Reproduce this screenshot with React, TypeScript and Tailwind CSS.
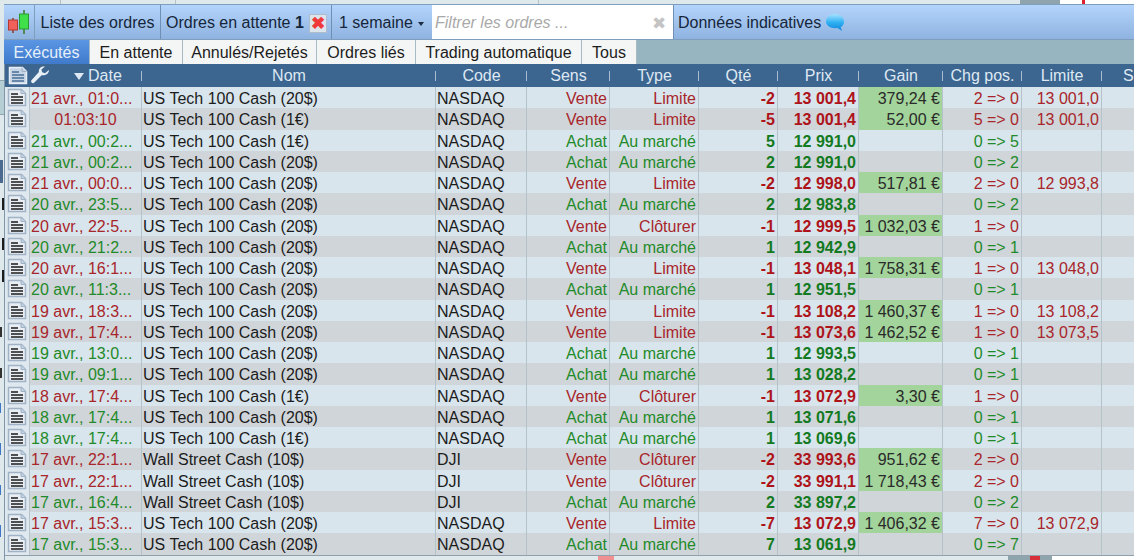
const FONT = "font-['Liberation_Sans',Arial,sans-serif]"

type Row = {
  date: string
  nom: string
  code: string
  sell: boolean
  type: string
  qte: string
  prix: string
  gain?: string
  chg: string
  limite?: string
  center?: boolean
}

const TECH20 = 'US Tech 100 Cash (20$)'
const TECH1 = 'US Tech 100 Cash (1€)'
const WALL = 'Wall Street Cash (10$)'

const ROWS: Row[] = [
  { date: '21 avr., 01:0...', nom: TECH20, code: 'NASDAQ', sell: true, type: 'Limite', qte: '-2', prix: '13 001,4', gain: '379,24 €', chg: '2 => 0', limite: '13 001,0' },
  { date: '01:03:10', nom: TECH1, code: 'NASDAQ', sell: true, type: 'Limite', qte: '-5', prix: '13 001,4', gain: '52,00 €', chg: '5 => 0', limite: '13 001,0', center: true },
  { date: '21 avr., 00:2...', nom: TECH1, code: 'NASDAQ', sell: false, type: 'Au marché', qte: '5', prix: '12 991,0', chg: '0 => 5' },
  { date: '21 avr., 00:2...', nom: TECH20, code: 'NASDAQ', sell: false, type: 'Au marché', qte: '2', prix: '12 991,0', chg: '0 => 2' },
  { date: '21 avr., 00:0...', nom: TECH20, code: 'NASDAQ', sell: true, type: 'Limite', qte: '-2', prix: '12 998,0', gain: '517,81 €', chg: '2 => 0', limite: '12 993,8' },
  { date: '20 avr., 23:5...', nom: TECH20, code: 'NASDAQ', sell: false, type: 'Au marché', qte: '2', prix: '12 983,8', chg: '0 => 2' },
  { date: '20 avr., 22:5...', nom: TECH20, code: 'NASDAQ', sell: true, type: 'Clôturer', qte: '-1', prix: '12 999,5', gain: '1 032,03 €', chg: '1 => 0' },
  { date: '20 avr., 21:2...', nom: TECH20, code: 'NASDAQ', sell: false, type: 'Au marché', qte: '1', prix: '12 942,9', chg: '0 => 1' },
  { date: '20 avr., 16:1...', nom: TECH20, code: 'NASDAQ', sell: true, type: 'Limite', qte: '-1', prix: '13 048,1', gain: '1 758,31 €', chg: '1 => 0', limite: '13 048,0' },
  { date: '20 avr., 11:3...', nom: TECH20, code: 'NASDAQ', sell: false, type: 'Au marché', qte: '1', prix: '12 951,5', chg: '0 => 1' },
  { date: '19 avr., 18:3...', nom: TECH20, code: 'NASDAQ', sell: true, type: 'Limite', qte: '-1', prix: '13 108,2', gain: '1 460,37 €', chg: '1 => 0', limite: '13 108,2' },
  { date: '19 avr., 17:4...', nom: TECH20, code: 'NASDAQ', sell: true, type: 'Limite', qte: '-1', prix: '13 073,6', gain: '1 462,52 €', chg: '1 => 0', limite: '13 073,5' },
  { date: '19 avr., 13:0...', nom: TECH20, code: 'NASDAQ', sell: false, type: 'Au marché', qte: '1', prix: '12 993,5', chg: '0 => 1' },
  { date: '19 avr., 09:1...', nom: TECH20, code: 'NASDAQ', sell: false, type: 'Au marché', qte: '1', prix: '13 028,2', chg: '0 => 1' },
  { date: '18 avr., 17:4...', nom: TECH1, code: 'NASDAQ', sell: true, type: 'Clôturer', qte: '-1', prix: '13 072,9', gain: '3,30 €', chg: '1 => 0' },
  { date: '18 avr., 17:4...', nom: TECH20, code: 'NASDAQ', sell: false, type: 'Au marché', qte: '1', prix: '13 071,6', chg: '0 => 1' },
  { date: '18 avr., 17:4...', nom: TECH1, code: 'NASDAQ', sell: false, type: 'Au marché', qte: '1', prix: '13 069,6', chg: '0 => 1' },
  { date: '17 avr., 22:1...', nom: WALL, code: 'DJI', sell: true, type: 'Clôturer', qte: '-2', prix: '33 993,6', gain: '951,62 €', chg: '2 => 0' },
  { date: '17 avr., 22:1...', nom: WALL, code: 'DJI', sell: true, type: 'Clôturer', qte: '-2', prix: '33 991,1', gain: '1 718,43 €', chg: '2 => 0' },
  { date: '17 avr., 16:4...', nom: WALL, code: 'DJI', sell: false, type: 'Au marché', qte: '2', prix: '33 897,2', chg: '0 => 2' },
  { date: '17 avr., 15:3...', nom: TECH20, code: 'NASDAQ', sell: true, type: 'Limite', qte: '-7', prix: '13 072,9', gain: '1 406,32 €', chg: '7 => 0', limite: '13 072,9' },
  { date: '17 avr., 15:3...', nom: TECH20, code: 'NASDAQ', sell: false, type: 'Au marché', qte: '7', prix: '13 061,9', chg: '0 => 7' },
]

const TABS = ['Exécutés', 'En attente', 'Annulés/Rejetés', 'Ordres liés', 'Trading automatique', 'Tous']
const TAB_WIDTHS = ['w-[86px]', 'w-[93px]', 'w-[134px]', 'w-[99px]', 'w-[166px]', 'w-[55px]']

const HEADERS = [
  { label: 'Nom', width: 'w-[294px]' },
  { label: 'Code', width: 'w-[91px]' },
  { label: 'Sens', width: 'w-[83px]' },
  { label: 'Type', width: 'w-[89px]' },
  { label: 'Qté', width: 'w-[79px]' },
  { label: 'Prix', width: 'w-[81px]' },
  { label: 'Gain', width: 'w-[84px]' },
  { label: 'Chg pos.', width: 'w-[79px]' },
  { label: 'Limite', width: 'w-[80px]' },
]

// bits of the window behind, showing in the gap on the left
const LEFT_MARKS = [
  { top: 160, height: 23, width: 3, left: 0, color: '#4a6a90' },
  { top: 198, height: 12, width: 2, left: 2, color: '#1c1c1c' },
  { top: 238, height: 12, width: 2, left: 2, color: '#1c1c1c' },
  { top: 270, height: 12, width: 2, left: 2, color: '#1c1c1c' },
  { top: 327, height: 10, width: 2, left: 0, color: '#333333' },
  { top: 368, height: 10, width: 2, left: 0, color: '#333333' },
  { top: 403, height: 10, width: 1, left: 0, color: '#3d78c8' },
  { top: 443, height: 12, width: 1, left: 0, color: '#3d78c8' },
  { top: 485, height: 10, width: 1, left: 0, color: '#3d78c8' },
  { top: 525, height: 12, width: 1, left: 0, color: '#3d78c8' },
]

function CandlesIcon() {
  return (
    <svg width="24" height="24" viewBox="0 0 24 24">
      <path d="M6 8v15" stroke="#8a3a2a" strokeWidth="1.5" />
      <rect x="1.500" y="10" width="9" height="10" fill="#f0605a" stroke="#b03a30" />
      <path d="M17 0v24" stroke="#3a7a20" strokeWidth="1.5" />
      <rect x="12.500" y="4" width="9" height="15" fill="#3fe04a" stroke="#2a9a30" />
    </svg>
  )
}

function DocIcon({ light }: { light?: boolean }) {
  return (
    <svg width="20" height="19" viewBox="0 0 20 19">
      <path
        d="M1.500 1.500h13l4 4v12h-17z"
        fill={light ? '#c6d5e6' : '#e8eef3'}
        stroke={light ? '#e8eef5' : '#9fb2c6'}
        strokeWidth="1.500"
      />
      <path d="M14 1.500v4h4.500" fill="#c4d2e2" stroke="#9fb2c6" />
      <path
        d="M4 6h7M4 9h12M4 12h12M4 15h12"
        stroke={light ? '#4a6f96' : '#1c1c1c'}
        strokeWidth="1.500"
      />
    </svg>
  )
}

function WrenchIcon() {
  return (
    <svg width="20" height="20" viewBox="0 0 18 18">
      <path
        d="M17 3.500l-3.500 3-2.500-.8-.7-2.500L13.500.5C10.500-.3 7.500 2 8 5.500L1.500 12.500c-1.500 1.500.5 4 2.200 2.500l6.800-6.700c3.500.7 7-2 6.500-4.800z"
        fill="#e6eef6"
      />
    </svg>
  )
}

function BubbleIcon() {
  return (
    <svg width="20" height="20" viewBox="0 0 20 20">
      <defs>
        <linearGradient id="bubble" x1="0" y1="0" x2="0" y2="1">
          <stop offset="0" stopColor="#a5e2ff" />
          <stop offset="0.5" stopColor="#2fb0f2" />
          <stop offset="1" stopColor="#0f86da" />
        </linearGradient>
      </defs>
      <path d="M10 1c5 0 9 3 9 7.500 0 2.700-1.400 4.600-3.300 5.800l1.300 3.700-4.500-3C7 15.800 1 13.500 1 8.500 1 4 5 1 10 1z" fill="url(#bubble)" />
    </svg>
  )
}

function Cell({ width, className, children }: { width: string; className?: string; children?: React.ReactNode }) {
  return (
    <div className={`${width} h-full shrink-0 border-r border-[#b4c2ca] whitespace-nowrap leading-[23px] ${className ?? ''}`}>
      {children}
    </div>
  )
}

function OrderRow({ row, even }: { row: Row; even: boolean }) {
  const color = row.sell ? 'text-[#a8252b]' : 'text-[#1f8a2a]'
  const strong = row.sell ? 'text-[#ad1319]' : 'text-[#137a1f]'
  return (
    <div className={`flex h-[21.25px] ${even ? 'bg-[#d0d5d9]' : 'bg-[#d8e5ec]'}`}>
      <Cell width="w-[25px]" className="flex items-center justify-center bg-[#dfe8ee]">
        <DocIcon />
      </Cell>
      <Cell width="w-[112px]" className={`${color} ${row.center ? 'text-center' : 'pl-[1px]'}`}>
        {row.date}
      </Cell>
      <Cell width="w-[294px]" className="pl-[1px] text-[#1c1c1c]">{row.nom}</Cell>
      <Cell width="w-[91px]" className="pl-[1px] text-[#1c1c1c]">{row.code}</Cell>
      <Cell width="w-[83px]" className={`pr-[2px] text-right ${color}`}>{row.sell ? 'Vente' : 'Achat'}</Cell>
      <Cell width="w-[89px]" className={`pr-[2px] text-right ${color}`}>{row.type}</Cell>
      <Cell width="w-[79px]" className={`pr-[2px] text-right font-bold ${strong}`}>{row.qte}</Cell>
      <Cell width="w-[81px]" className={`pr-[2px] text-right font-bold ${strong}`}>{row.prix}</Cell>
      <Cell width="w-[84px]" className={`pr-[2px] text-right text-[#2a2a2a] ${row.gain ? 'bg-[#a2d49b]' : ''}`}>
        {row.gain}
      </Cell>
      <Cell width="w-[79px]" className={`pr-[2px] text-right ${color}`}>{row.chg}</Cell>
      <Cell width="w-[80px]" className={`pr-[2px] text-right ${color}`}>{row.limite}</Cell>
      <div className="flex-1" />
    </div>
  )
}

export default function App() {
  return (
    <div className={`${FONT} relative flex h-[560px] w-[1134px] flex-col overflow-hidden bg-[#dfe9ec] pt-[4px] text-[16px]`}>
      {/* window behind: top and bottom edges */}
      <div className="absolute left-[1020px] top-0 h-[4px] w-[40px] bg-[#8fa5ae]" />
      <div className="absolute left-[1060px] top-0 h-[4px] w-[74px] bg-white" />
      <div className="absolute left-[1082px] top-0 h-[4px] w-[3px] bg-[#e0202c]" />
      <div className="absolute left-[60px] top-0 h-[4px] w-px bg-[#b4c2ca]" />
      <div className="absolute left-[175px] top-0 h-[4px] w-px bg-[#b4c2ca]" />
      <div className="absolute left-[538px] top-0 h-[4px] w-px bg-[#b4c2ca]" />
      <div className="absolute left-[598px] top-[556px] h-[4px] w-[16px] bg-[#f09090]" />
      <div className="absolute left-[1008px] top-[556px] h-[4px] w-[44px] bg-[#8fa5ae]" />
      <div className="absolute left-[1030px] top-[556px] h-[4px] w-[10px] bg-[#d8303a]" />
      <div className="absolute left-[1052px] top-[556px] h-[4px] w-[82px] bg-white" />
      {/* window behind: left gap */}
      <div className="absolute left-0 top-[80px] h-[35px] w-[4px] border-y border-[#8fa5ae] bg-[#b5ced4]" />
      {LEFT_MARKS.map((m) => (
        <div
          key={m.top}
          className="absolute"
          style={{ top: m.top, left: m.left, width: m.width, height: m.height, backgroundColor: m.color }}
        />
      ))}

      {/* Toolbar */}
      <div className="ml-[4px] flex h-[36px] shrink-0 items-center border-y border-[#7f9dbd] bg-gradient-to-b from-[#b3d4fb] to-[#8fb3e0] text-[#16263a]">
        <div className="flex h-full w-[31px] items-center justify-center border-r border-[#7f9dbd]">
          <CandlesIcon />
        </div>
        <div className="flex h-full w-[126px] items-center justify-center border-r border-[#6f8fb4] pt-[2px]">Liste des ordres</div>
        <div className="flex h-full w-[171px] items-center gap-[5px] border-r border-[#6f8fb4] pl-[5px] pt-[2px]">
          <span>
            Ordres en attente <b>1</b>
          </span>
          <span className="flex h-[19px] w-[18px] items-center justify-center border border-[#aebccc] bg-[#dce4ec] text-[17px] font-bold leading-none text-[#f03a3a]">
            ✖
          </span>
        </div>
        <div className="flex h-full w-[100px] items-center gap-[5px] pl-[7px] pt-[2px]">
          1 semaine
          <span className="mt-[1px] h-0 w-0 border-x-[3px] border-t-[4px] border-x-transparent border-t-[#1c2c40]" />
        </div>
        <div className="flex h-full w-[241px] items-center justify-between bg-white pl-[3px] pr-[7px] pt-[2px] italic text-[#a9a9a9]">
          Filtrer les ordres ...
          <span className="text-[17px] not-italic leading-none text-[#c4c4c4]">✖</span>
        </div>
        <div className="flex h-full flex-1 items-center gap-[4px] border-l border-[#6f8fb4] pl-[4px] pt-[2px]">
          Données indicatives
          <BubbleIcon />
        </div>
      </div>

      {/* Tabs */}
      <div className="ml-[4px] flex h-[24px] shrink-0 bg-[#97b5c1]">
        {TABS.map((tab, i) => (
          <div
            key={tab}
            className={`${TAB_WIDTHS[i]} flex items-center justify-center border-r border-[#a8bac4] pt-[1px] ${
              i === 0 ? 'bg-gradient-to-b from-[#5a96e4] to-[#3f7acb] text-[#e6f0fb]' : 'bg-[#f4f6f5] text-[#1c1c1c]'
            }`}
          >
            {tab}
          </div>
        ))}
      </div>

      {/* Table */}
      <div className="ml-[4px] flex flex-1 flex-col border-l border-[#7f97a8]">
        <div className="flex h-[23px] shrink-0 items-center bg-[#3c6590] text-[#dfe9f3]">
          <div className="flex h-full w-[25px] shrink-0 items-center justify-center">
            <DocIcon light />
          </div>
          <div className="relative flex h-full w-[112px] shrink-0 items-center pt-[1px]">
            <WrenchIcon />
            <span className="ml-[24px] mt-[1px] h-0 w-0 border-x-[5px] border-t-[7px] border-x-transparent border-t-[#dfe9f3]" />
            <span className="ml-[4px]">Date</span>
            <span className="absolute right-0 top-[7px] h-[10px] w-px bg-[#a9bdd2]" />
          </div>
          {HEADERS.map((h) => (
            <div key={h.label} className={`${h.width} relative flex h-full shrink-0 items-center justify-center pt-[1px]`}>
              {h.label}
              <span className="absolute right-0 top-[7px] h-[10px] w-px bg-[#a9bdd2]" />
            </div>
          ))}
          <div className="flex-1 pl-[21px] pt-[1px]">S</div>
        </div>
        {ROWS.map((row, i) => (
          <OrderRow key={i} row={row} even={i % 2 === 1} />
        ))}
        <div className="mt-auto h-[5px] border-t border-[#8fa0ac] bg-[#dfe9ec]" />
      </div>
    </div>
  )
}
